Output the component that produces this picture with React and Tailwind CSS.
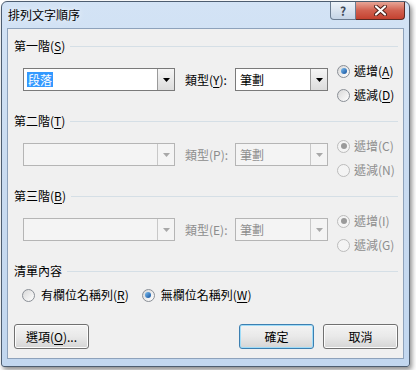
import React from 'react';

const FONT = "font-['Microsoft_JhengHei','Noto_Sans_CJK_TC','Noto_Sans',sans-serif]";

function Radio({ checked, disabled }) {
  return (
    <span
      className={`flex h-[13px] w-[13px] shrink-0 items-center justify-center rounded-full border ${
        disabled ? 'border-[#bcbcbc] bg-[#f4f4f4]' : 'border-[#8a8f96] bg-linear-to-br from-[#d8d8d8] to-white'
      }`}
    >
      {checked && (
        <span
          className={`h-[6px] w-[6px] rounded-full ${
            disabled ? 'bg-[#9a9a9a]' : 'bg-linear-to-br from-[#7fc0f0] to-[#0d4f9c]'
          }`}
        />
      )}
    </span>
  );
}

function Arrow({ disabled }) {
  return (
    <svg width="7" height="4" viewBox="0 0 7 4">
      <path d="M0 0h7L3.5 4z" fill={disabled ? '#a8a8a8' : '#000'} />
    </svg>
  );
}

function Combo({ value, width, disabled, selected }) {
  return (
    <div
      className={`flex h-[23px] ${width} border ${
        disabled ? 'border-[#b5b5b5] bg-[#f4f4f4]' : 'border-[#7a7a7a] bg-white'
      }`}
    >
      <div className="flex flex-1 items-center pl-[3px]">
        {value && (
          <span
            className={`px-[1px] leading-[15px] ${
              selected ? 'bg-[#3399ff] text-white' : disabled ? 'text-[#8d8d8d]' : 'text-black'
            }`}
          >
            {value}
          </span>
        )}
      </div>
      <div
        className={`flex w-[17px] items-center justify-center border-l ${
          disabled
            ? 'border-[#c8c8c8] bg-[#f4f4f4]'
            : 'border-[#9a9a9a] bg-linear-to-b from-[#f5f5f5] to-[#dcdcdc]'
        }`}
      >
        <Arrow disabled={disabled} />
      </div>
    </div>
  );
}

function Key({ k }) {
  return (
    <>
      (<span className="underline underline-offset-2">{k}</span>)
    </>
  );
}

function Header({ children }) {
  return (
    <div className="flex h-4 items-center gap-[5px]">
      <span className="whitespace-nowrap">{children}</span>
      <div className="h-px flex-1 bg-[#d5dfe6]" />
    </div>
  );
}

function Level({ title, typeLabel, value, up, down, disabled, selected }) {
  return (
    <div className="flex h-[75px] flex-col">
      <Header>{title}</Header>
      <div className="mt-[14px] flex items-start pl-[9px]">
        <Combo value={value} width="w-[152px]" disabled={disabled} selected={selected} />
        <div className={`ml-[10px] flex h-[23px] w-[50px] items-center ${disabled ? 'text-[#8d8d8d]' : ''}`}>
          {typeLabel}
        </div>
        <Combo value="筆劃" width="w-[93px]" disabled={disabled} />
        <div className={`ml-[9px] -mt-[9px] flex flex-col ${disabled ? 'text-[#8d8d8d]' : ''}`}>
          <div className="flex h-6 items-center gap-[4px]">
            <Radio checked disabled={disabled} />
            <span>{up}</span>
          </div>
          <div className="flex h-6 items-center gap-[4px]">
            <Radio disabled={disabled} />
            <span>{down}</span>
          </div>
        </div>
      </div>
    </div>
  );
}

function Button({ children, primary }) {
  return (
    <button
      className={`flex h-[25px] w-[75px] items-center justify-center rounded-[3px] border bg-linear-to-b from-[#f3f3f3] via-[#e9e9e9] to-[#d5d5d5] ${
        primary ? 'border-[#3c7fb1] shadow-[inset_0_0_0_1px_#9fdcf8]' : 'border-[#707070] shadow-[inset_0_0_0_1px_#fcfcfc]'
      }`}
    >
      {children}
    </button>
  );
}

export default function App() {
  return (
    <div className={`h-[370px] w-[416px] bg-white pl-[1px] pt-[1px] text-[12px] leading-4 text-black ${FONT}`}>
      <div className="flex h-[366px] w-[409px] flex-col rounded-t-[6px] rounded-b-[3px] border border-[#4d5d70] bg-linear-to-b from-[#d3e3f5] via-[#c9dbf0] to-[#c2d7ef] shadow-[2px_3px_5px_rgba(0,0,0,0.45)]">
        <div className="flex h-[26px] items-start justify-between pl-[6px] pr-[4px]">
          <span className="mt-[5px] text-[12px] leading-4 text-black [text-shadow:0_0_6px_#ffffff]">排列文字順序</span>
          <div className="flex">
            <div className="flex h-[18px] w-[26px] items-center justify-center rounded-bl-[4px] border border-t-0 border-[#6b7c91] bg-linear-to-b from-[#eef3f9] to-[#c5d4e6] text-[12px] font-bold text-[#3e4a58]">
              ?
            </div>
            <div className="flex h-[18px] w-[49px] items-center justify-center rounded-br-[4px] border border-l-0 border-t-0 border-[#5b2a23] bg-linear-to-b from-[#e7a597] via-[#d1604f] to-[#c4412f]">
              <svg width="13" height="11" viewBox="0 0 13 11">
                <path d="M2 1.5l9 8M11 1.5l-9 8" stroke="#4a1e18" strokeWidth="4" strokeLinecap="round" />
                <path d="M2 1.5l9 8M11 1.5l-9 8" stroke="#fff" strokeWidth="2.2" strokeLinecap="round" />
              </svg>
            </div>
          </div>
        </div>
        <div className="ml-[5px] flex h-[331px] w-[397px] flex-col border border-[#8ea2bb] bg-[#f0f0f0] pl-[6px] pr-[5px] pt-[9px]">
          <Level
            title={<>第一階<Key k="S" /></>}
            typeLabel={<>類型<Key k="Y" />:</>}
            value="段落"
            selected
            up={<>遞增<Key k="A" /></>}
            down={<>遞減<Key k="D" /></>}
          />
          <Level
            title={<>第二階<Key k="T" /></>}
            typeLabel="類型(P):"
            disabled
            up="遞增(C)"
            down="遞減(N)"
          />
          <Level
            title={<>第三階<Key k="B" /></>}
            typeLabel="類型(E):"
            disabled
            up="遞增(I)"
            down="遞減(G)"
          />
          <Header>清單內容</Header>
          <div className="mt-[8px] flex h-4 items-center pl-[8px]">
            <Radio />
            <span className="ml-[6px]">有欄位名稱列<Key k="R" /></span>
            <span className="ml-[13px]"><Radio checked /></span>
            <span className="ml-[6px]">無欄位名稱列<Key k="W" /></span>
          </div>
          <div className="mt-[21px] flex justify-between">
            <Button>選項<Key k="O" />...</Button>
            <div className="flex gap-[9px]">
              <Button primary>確定</Button>
              <Button>取消</Button>
            </div>
          </div>
        </div>
      </div>
    </div>
  );
}
